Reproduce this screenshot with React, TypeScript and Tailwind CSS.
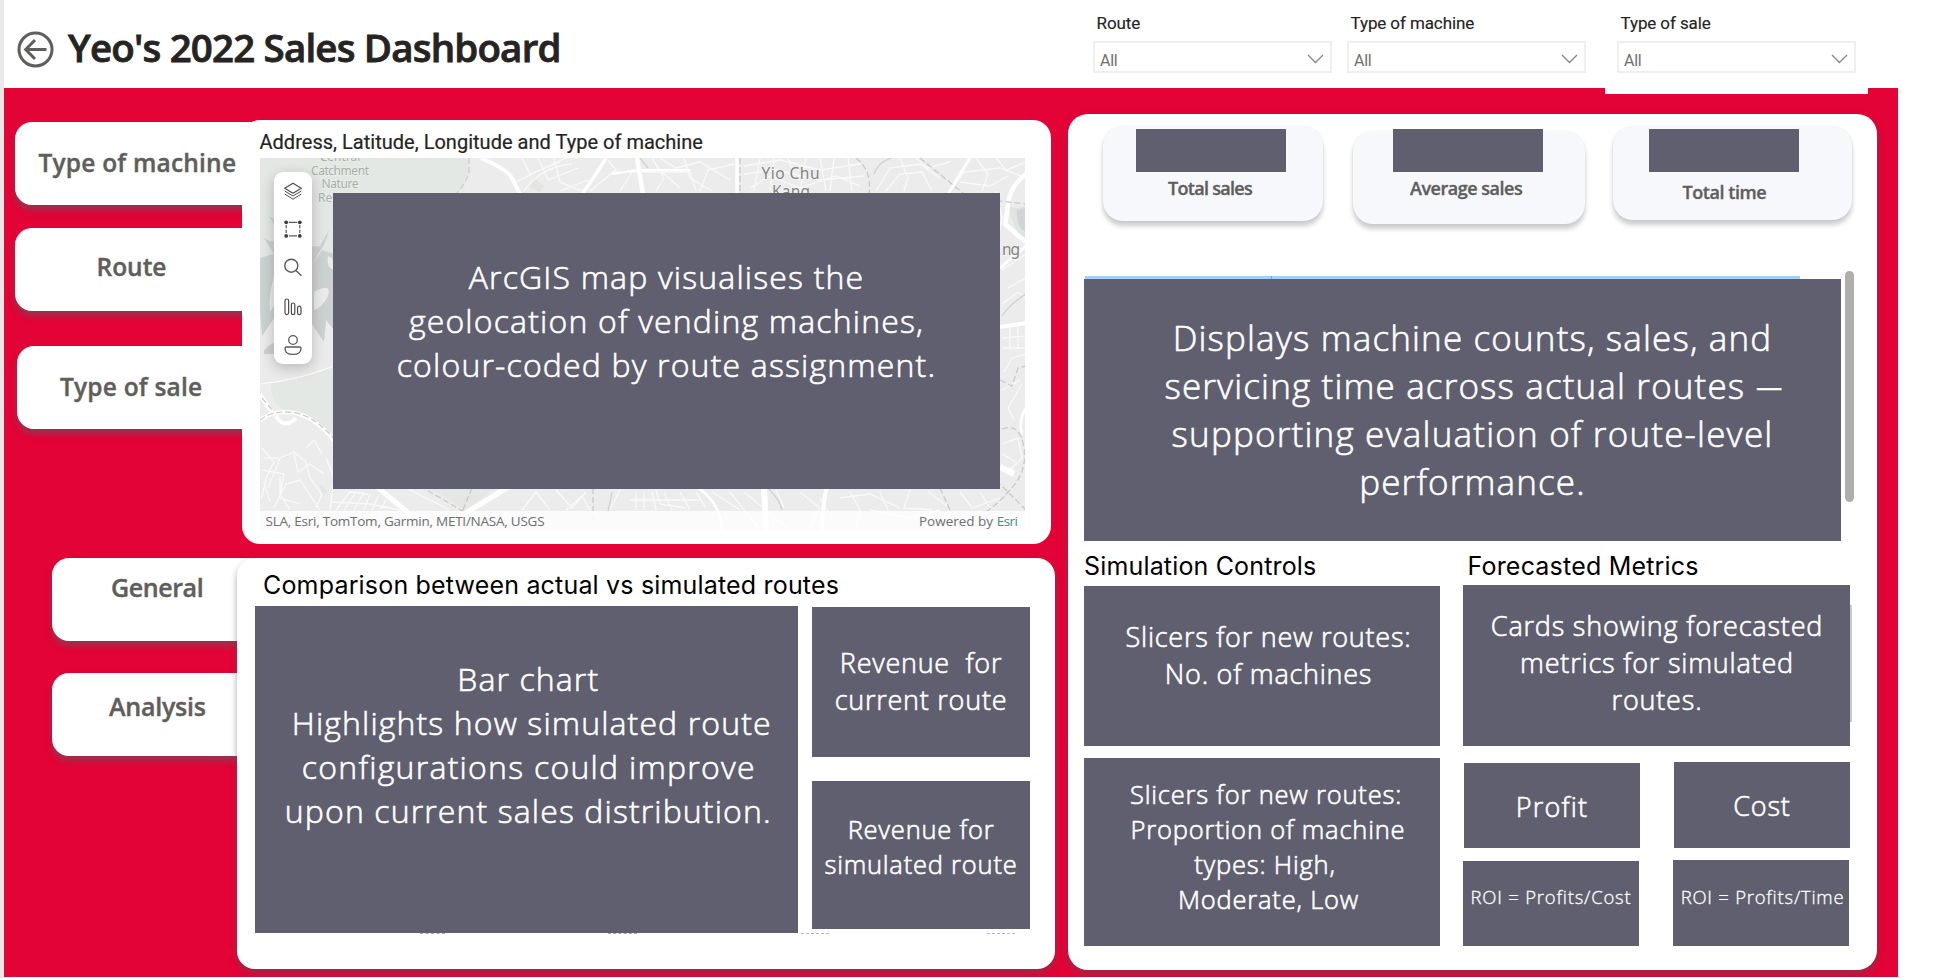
import type { ReactNode } from "react";

const slabText =
  "font-['Open_Sans',sans-serif] font-light text-white text-center whitespace-pre";

const thick = "[-webkit-text-stroke:0.6px_white]";
const thin = "[-webkit-text-stroke:0.3px_white]";

function Slab({ className, fine, children }: { className: string; fine?: boolean; children?: ReactNode }) {
  return (
    <div className={`shrink-0 overflow-hidden bg-[#605f70] ${slabText} ${fine ? thin : thick} ${className}`}>{children}</div>
  );
}

function Filter({ label, className }: { label: string; className: string }) {
  return (
    <div className={`shrink-0 w-[239px] pt-[13px] font-[Roboto,sans-serif] ${className}`}>
      <div className="pl-[3.5px] h-7 text-[17px] leading-5 tracking-[-0.1px] text-[#252423] [-webkit-text-stroke:0.15px_#252423]">{label}</div>
      <div className="h-8 w-full border-2 border-[#efefef] bg-white flex items-start justify-between pl-[5px] pr-[6px]">
        <span className="pt-[7.5px] text-[16px] leading-5 tracking-[-0.3px] text-[#706f6e]">All</span>
        <svg className="mt-[11px]" width="17" height="10" viewBox="0 0 17 10" fill="none" stroke="#868686" strokeWidth="1.3">
          <path d="M1 1l7.5 7.5L16 1" />
        </svg>
      </div>
    </div>
  );
}

function NavTab({ label, className }: { label: string; className: string }) {
  return (
    <div
      className={`shrink-0 h-[83px] rounded-l-[17px] bg-white shadow-[0_5px_6px_rgba(90,90,95,0.55)] font-['Open_Sans',sans-serif] font-semibold leading-[34px] text-[#605e5c] whitespace-nowrap [-webkit-text-stroke:0.4px_#605e5c] ${className}`}
    >
      {label}
    </div>
  );
}

function Kpi({ label, card, slab, text }: { label: string; card: string; slab: string; text: string }) {
  return (
    <div
      className={`shrink-0 rounded-[20px] bg-[#f7f8fc] shadow-[0_5px_5px_rgba(0,0,0,0.2),0_0_2px_rgba(0,0,0,0.08)] ${card}`}
    >
      <div className={`w-[150px] bg-[#605f70] ${slab}`} />
      <div
        className={`font-['Open_Sans',sans-serif] font-semibold text-[18px] leading-6 text-[#605e5c] whitespace-nowrap [-webkit-text-stroke:0.35px_#605e5c] ${text}`}
      >
        {label}
      </div>
    </div>
  );
}

function MapArt() {
  return (
    <svg className="absolute inset-0" width="766" height="372" viewBox="0 0 766 372" fill="none">
      <rect width="766" height="372" fill="#ececec" />
      <path d="M0 0H209V14Q206 26 198 36H74V210L50 218Q20 226 0 226Z" fill="#e3e8e4" />
      <path d="M0 170Q30 150 74 165V208Q40 222 0 226Z" fill="#ebebeb" />
      <path
        d="M4 80Q14 86 18 82L28 90L60 88L69 72Q66 86 58 96L52 108L62 92L74 96V172L66 162L64 184L52 166L44 172L34 196L4 196Q2 190 16 184L26 176L14 160L2 178L0 150V100L14 96Z"
        fill="#ccd1d2"
      />
      <path d="M14 118Q24 124 22 136L10 154Q8 140 14 118ZM54 134Q72 124 68 138Q62 150 54 152ZM68 98Q76 100 74 112Q66 110 68 98ZM30 150Q40 160 34 174L24 166Z" fill="#ebebeb" />
      <path d="M11 224Q45 220 74 208V284Q54 258 24 252Q10 246 11 224Z" fill="#e3e8e4" />
      <path d="M9 58l6 4-1 4z" fill="#ccd1d2" />
      <path d="M170 330L205 352L236 330Z" fill="#e3e8e4" />
      <path d="M748 46Q758 54 766 46V82Q754 76 748 46Z" fill="#dfe4e1" />
      <path d="M757 52L766 50V74Q756 70 757 52Z" fill="#cfd5d6" />
      <path d="M270 30L274 20L284 28L280 34ZM60 326l8 8-6 4z" fill="#e0e6e1" />
      <g stroke="#f9f9f9" strokeWidth="1.3">
        <path d="M262 0L270 16L300 4M278 0L288 22L318 10M294 0L300 24L322 33M256 24L280 12L306 0M264 33Q282 8 312 6M300 33L328 22M330 33L356 12L348 2M360 33L372 14L400 12L420 30M352 14H430L436 33M392 0L404 20L396 33" />
        <path d="M400 0L416 10L440 4L470 22M424 0L430 20L452 33M440 33L448 12L474 6M484 8L520 2L560 12L600 6M484 16L516 12L560 22L604 18M490 30L510 18L540 30L576 18L600 28M500 0L494 33M514 0L510 33M528 0L532 12M546 0L540 33M560 0L566 33M574 0L570 33M588 0L592 33" />
        <path d="M616 33L630 10L660 6L680 20M626 33L640 16L662 14L672 33M640 0L648 20L644 33M656 0L668 10L690 4M690 33L704 14L740 10L766 20M716 0L728 16L722 33M736 0L746 12L766 4M700 24L730 28L748 18" />
        <path d="M736 33L742 60L736 90M742 112L766 96M748 130L766 120M742 146L758 134L766 140M742 180L766 178M742 190H766M750 168V192M758 166V190M744 214L752 200L766 196M742 232L760 222M754 262L748 250L762 226M742 286L758 280L762 300L750 312M742 296L756 304" />
        <path d="M2 290L14 304L6 320L2 340M8 330L20 300L34 294L46 304L50 320L62 336L56 350M2 312L24 316L20 336L30 352M14 350L26 326L40 322L60 352M46 290L54 282L62 296M34 296L38 314L50 306L64 316M20 318V340L40 346M4 300H18M4 324L10 344M66 300L74 320L70 352" />
        <path d="M76 352L90 334L108 336M84 352L96 334M94 352L104 334M104 352L110 336M112 352L118 338M120 352L126 342M70 344L110 346L140 352M150 332L190 352M262 352L276 334L290 352M296 332L312 350L326 334M306 352L322 338L330 352M350 352L360 332M376 334V352M384 334V352M392 334L396 352M370 342H440M404 334L412 352M420 334L430 352M396 332L400 346L426 350" />
        <path d="M436 334L446 350M452 334L480 352M470 334L500 372M484 334L530 372M516 332L524 350M540 334L560 350L548 372M580 340L610 336L640 350M590 334L600 352L596 372M620 334L628 352M650 332L644 350L672 352M668 334L690 350M700 334L712 350L740 340M720 334L730 350M560 340L572 360M610 352L650 360L680 352" />
      </g>
      <g stroke="#ffffff" strokeLinejoin="round">
        <path d="M221 0Q248 12 252 20T260 36" strokeWidth="4" />
        <path d="M346 0Q334 20 322 36" strokeWidth="3.5" />
        <path d="M377 0L383 36" strokeWidth="4.5" />
        <path d="M352 16L377 12L430 12" strokeWidth="1.8" />
        <path d="M477 0V36" strokeWidth="3.5" />
        <path d="M710 0L688 36" strokeWidth="3" />
        <path d="M766 16Q750 28 748 46T745 66Q756 76 766 84" strokeWidth="4.5" />
        <path d="M740 110L766 88" strokeWidth="3" />
        <path d="M740 169L766 165" strokeWidth="4" />
        <path d="M0 262Q10 254 26 254Q52 254 76 285M0 236Q8 250 14 256M16 258Q24 272 36 260" strokeWidth="4" />
        <path d="M0 226Q40 222 74 208" strokeWidth="1" />
        <path d="M116 328L152 358" strokeWidth="5" />
        <path d="M204 356L250 328" strokeWidth="5" />
        <path d="M504 328L506 372" strokeWidth="6" />
        <path d="M567 328Q562 350 562 372" strokeWidth="4" />
        <path d="M438 330Q460 344 462 372" strokeWidth="2.5" />
        <path d="M740 309L754 316" strokeWidth="6" />
        <path d="M766 250Q758 262 762 276" strokeWidth="2.5" />
      </g>
      <g stroke="#c9c9c5" strokeWidth="1.3" strokeDasharray="6 3">
        <path d="M209 0V14Q206 26 196 36" stroke="#d0cfc8" />
        <path d="M0 262Q10 254 26 254Q52 254 74 281M2 240L14 254" />
        <path d="M480 0V36M596 0Q612 12 609 36M660 0L704 36L740 43L766 46" />
        <path d="M160 328L184 342L204 354M212 330L202 354M333 330V362M680 330L690 352M766 352L740 326M742 271Q760 264 764 290T746 336Q740 344 726 354M740 222L752 228L758 210L766 208" />
      </g>
      <g stroke="#cdd3d3" strokeWidth="1.3">
        <path d="M614 16Q618 4 632 0M380 0L388 10M508 330Q520 342 522 352M742 158Q750 146 766 136M348 354L352 334" />
      </g>
      <g
        fontFamily="'Noto Sans', sans-serif"
        textAnchor="middle"
        fill="#a7aea2"
        fontSize="12"
        stroke="#eef1ee"
        strokeWidth="1"
        paintOrder="stroke"
      >
        <text x="80" y="2.500">Central</text>
        <text x="80" y="16.500" textLength="58">Catchment</text>
        <text x="80" y="30" textLength="37">Nature</text>
        <text x="58" y="44" textAnchor="start">Reserve</text>
      </g>
      <g
        fontFamily="'Noto Sans', sans-serif"
        fill="#828282"
        fontSize="15.500"
        stroke="#f6f6f6"
        strokeWidth="1.500"
        paintOrder="stroke"
      >
        <text x="501.500" y="21" textLength="58">Yio Chu</text>
        <text x="512" y="39" textLength="38">Kang</text>
        <text x="742" y="97" textLength="18">ng</text>
      </g>
    </svg>
  );
}

function MapToolbar() {
  return (
    <div className="absolute left-[14.5px] top-[14px] w-[38px] h-[192px] rounded-[9px] bg-white shadow-[0_4px_14px_rgba(0,0,0,0.22)] flex flex-col items-center pt-[10px] gap-[18.200px]">
      <svg width="20" height="20" viewBox="0 0 20 20" fill="none" stroke="#4d4d4d" strokeWidth="1.2" strokeLinejoin="round">
        <path d="M10 1.200L18.300 6.200L10 11.200L1.700 6.200Z" />
        <path d="M1.700 9L10 14L18.300 9M1.700 12L10 17.200L18.300 12" strokeWidth="1" />
      </svg>
      <svg width="20" height="20" viewBox="0 0 20 20" fill="#3d3d3d" stroke="#5c5c5c" strokeWidth="1.2">
        <path d="M6 2.300H14M6 15.900H14M3.200 5V8.300M3.200 9.700V13M16.800 5V8.300M16.800 9.700V13" />
        <g stroke="none">
          <circle cx="3.200" cy="2.300" r="1.900" />
          <circle cx="16.800" cy="2.300" r="1.900" />
          <circle cx="3.200" cy="15.900" r="1.900" />
          <circle cx="16.800" cy="15.900" r="1.900" />
        </g>
      </svg>
      <svg width="20" height="20" viewBox="0 0 20 20" fill="none" stroke="#5a5a5a" strokeWidth="1.400">
        <circle cx="8.300" cy="7.700" r="6.500" />
        <path d="M12.900 12.400L18.400 17.800" />
      </svg>
      <svg width="20" height="20" viewBox="0 0 20 20" fill="none" stroke="#4d4d4d" strokeWidth="1.200">
        <rect x="2" y="2" width="3.600" height="15.600" rx="1.800" />
        <rect x="8.400" y="6" width="3.400" height="11.600" rx="1.700" />
        <rect x="14.600" y="9.200" width="3.400" height="8.400" rx="1.700" />
      </svg>
      <svg width="20" height="20" viewBox="0 0 20 20" fill="none" stroke="#5a5a5a" strokeWidth="1.300">
        <circle cx="10" cy="5" r="4.300" />
        <path d="M3.300 12H16.700Q18 12 18 13.400C18 17 15 19.300 10 19.300S2 17 2 13.400Q2 12 3.300 12Z" />
      </svg>
    </div>
  );
}

function MapPanel() {
  return (
    <section className="relative z-10 shrink-0 w-[809px] h-[423.5px] rounded-[18px] bg-white pt-[9.5px] pl-[17.5px]">
      <h2 className="h-[28.500px] font-[Roboto,sans-serif] text-[20px] leading-6 tracking-[0.02px] text-[#252423] whitespace-nowrap [-webkit-text-stroke:0.2px_#252423]">
        Address, Latitude, Longitude and Type of machine
      </h2>
      <div className="relative w-[765px] h-[372px] overflow-hidden">
        <MapArt />
        <MapToolbar />
        <div className="relative flex flex-col h-full">
          <Slab className="mt-[35px] ml-[73.5px] w-[667px] h-[295.5px] pt-[61.5px] text-[32px] leading-[44px] tracking-[1.17px]">
            <p>ArcGIS map visualises the</p>
            <p>geolocation of vending machines,</p>
            <p>colour-coded by route assignment.</p>
          </Slab>
          <div className="mt-auto h-[19px] bg-white/80 flex justify-between pl-[6px] pr-[7px] pt-px font-['Open_Sans',sans-serif] text-[13.500px] leading-[19px] text-[#6e6e6e] whitespace-nowrap">
            <span className="tracking-[-0.24px]">SLA, Esri, TomTom, Garmin, METI/NASA, USGS</span>
            <span>
              Powered by <span className="text-[#3f9482] tracking-[-0.5px]">Esri</span>
            </span>
          </div>
        </div>
      </div>
    </section>
  );
}

function ComparisonPanel() {
  return (
    <section className="relative z-10 shrink-0 w-[818px] h-[411px] rounded-[18px] bg-white shadow-[0_4px_6px_rgba(80,80,85,0.5)] pt-[11px] pl-[17.5px]">
      <h2 className="h-[37px] pl-[8.5px] font-[Inter,sans-serif] text-[25px] leading-8 tracking-[0.18px] text-black whitespace-nowrap">
        Comparison between actual vs simulated routes
      </h2>
      <div className="flex gap-[14px]">
        <Slab className="w-[543.5px] h-[326.5px] pt-[50.5px] pl-[4px] text-[32px] leading-[44px] tracking-[1.12px]">
          <p>Bar chart</p>
          <p className="pl-[7px]">Highlights how simulated route</p>
          <p className="pl-px tracking-[1.250px]">configurations could improve</p>
          <p>upon current sales distribution.</p>
        </Slab>
        <div className="flex flex-col gap-[23.5px] pt-px">
          <Slab className="w-[218px] h-[150px] pt-[36.5px] text-[27px] leading-[37.5px] tracking-[0.75px]">
            <p>Revenue&nbsp; for</p>
            <p>current route</p>
          </Slab>
          <Slab className="w-[218px] h-[148.500px] pt-[31px] text-[25.5px] leading-[35px] tracking-[0.78px]">
            <p>Revenue for</p>
            <p>simulated route</p>
          </Slab>
        </div>
      </div>
      <div className="flex h-px pl-[165px]">
        <div className="w-[25px] border-t border-dashed border-[#a8a8a8]" />
        <div className="ml-[163px] w-[29px] border-t border-dashed border-[#a8a8a8]" />
        <div className="ml-[164px] w-[28px] border-t border-dashed border-[#b8b8b8]" />
        <div className="ml-[158px] w-[28px] border-t border-dashed border-[#b8b8b8]" />
      </div>
    </section>
  );
}

function MetricsPanel() {
  return (
    <section className="shrink-0 w-[808.5px] h-[856px] rounded-[20px] bg-white shadow-[0_4px_6px_rgba(80,80,85,0.5)]">
      <div className="flex items-start h-[162px] pl-[35px] pt-[12px]">
        <Kpi label="Total sales" card="w-[220px] h-[95px]" slab="h-[43.500px] mt-[2.500px] ml-[33px]" text="pt-[4px] pl-[65px] tracking-[-0.7px]" />
        <Kpi label="Average sales" card="ml-[30px] mt-[4.5px] w-[232px] h-[93.500px]" slab="h-[43.500px] -mt-[2px] ml-[40px]" text="pt-[4px] pl-[57px] tracking-[-0.48px]" />
        <Kpi label="Total time" card="ml-[28px] w-[239px] h-[94px]" slab="h-[43.500px] mt-[2.500px] ml-[36px]" text="pt-[8px] pl-[69.500px] tracking-[-0.45px]" />
      </div>
      <div className="flex gap-[4px] pl-[16px] -mt-[5px]">
        <div className="pt-[5px]">
          <div className="flex h-[2.500px] w-[715px] ml-px bg-[#a3cff9]">
            <div className="ml-[186px] w-px bg-[#6ea6dd]" />
          </div>
          <Slab className="w-[757px] h-[262.5px] pt-[35px] pl-[20px] text-[35px] leading-[48px] tracking-[1.15px]">
            <p>Displays machine counts, sales, and</p>
            <p>
              servicing time across actual routes <span className="inline-block w-[25px] origin-left scale-x-[0.75]">—</span>
            </p>
            <p className="tracking-[1.200px]">supporting evaluation of route-level</p>
            <p>performance.</p>
          </Slab>
        </div>
        <div className="w-[8.5px] h-[231px] rounded-full bg-[#b0aead]" />
      </div>
      <div className="flex pl-[16px]">
        <div className="w-[356px] pt-[9px]">
          <h2 className="h-[36px] font-[Inter,sans-serif] text-[25px] leading-8 tracking-[0.16px] text-black">Simulation Controls</h2>
          <Slab className="w-[356px] h-[160px] pt-[31.500px] pl-[13px] text-[27px] leading-[37px] tracking-[0.75px]">
            <p>Slicers for new routes:</p>
            <p>No. of machines</p>
          </Slab>
          <Slab className="mt-[12px] w-[356px] h-[188px] pt-[19px] pl-[10px] text-[25.5px] leading-[35px] tracking-[0.8px]">
            <p className="pr-[2px]">Slicers for new routes:</p>
            <p className="pl-[2px]">Proportion of machine</p>
            <p className="pr-[4px]">types: High,</p>
            <p className="pl-[3px]">Moderate, Low</p>
          </Slab>
        </div>
        <div className="ml-[23px] w-[390px] pt-[9px]">
          <h2 className="h-[35px] pl-[4.5px] font-[Inter,sans-serif] text-[25px] leading-8 tracking-[0.2px] text-black">Forecasted Metrics</h2>
          <div className="flex items-start">
            <Slab className="w-[387px] h-[161px] pt-[22px] pl-px text-[27px] leading-[37px] tracking-[0.8px]">
              <p>Cards showing forecasted</p>
              <p>metrics for simulated</p>
              <p>routes.</p>
            </Slab>
            <div className="mt-[20px] w-[2px] h-[117px] bg-[#c9c9c9]" />
          </div>
          <div className="flex items-end gap-[34px] pl-px mt-[15.500px] h-[86.5px]">
            <Slab className="w-[176px] h-[85.500px] pt-[25px] text-[27px] leading-[37px] tracking-[1.200px]">Profit</Slab>
            <Slab className="w-[176px] h-[86.5px] pt-[25px] text-[27px] leading-[37px] tracking-[0.8px]">Cost</Slab>
          </div>
          <div className="flex items-end gap-[34px] mt-[11.500px] h-[86.5px]">
            <Slab fine className="w-[176px] h-[85.500px] pt-[23px] text-[18.5px] leading-[26px] tracking-[0.78px]">ROI = Profits/Cost</Slab>
            <Slab fine className="w-[176px] h-[86.5px] pt-[24px] pl-[3px] text-[18.5px] leading-[26px] tracking-[0.76px]">ROI = Profits/Time</Slab>
          </div>
        </div>
      </div>
    </section>
  );
}

export default function App() {
  return (
    <div className="w-[1953px] h-[978px] overflow-hidden bg-white flex">
      <div className="shrink-0 w-[4px] h-full bg-[#e9e7e8]" />
      <div className="shrink-0 w-[1894px] h-[977px] flex flex-col">
        <header className="relative shrink-0 h-[88px] bg-white flex items-start pl-[13px]">
          <svg className="mt-[31px] shrink-0" width="37" height="37" viewBox="0 0 37 37" fill="none" stroke="#605e5c" strokeWidth="3">
            <circle cx="18.500" cy="18.500" r="16.500" />
            <path d="M29.500 18.500H9M18 9L8.700 18.500L18 28" />
          </svg>
          <h1 className="w-[1019px] pl-[14px] pt-[23px] font-['Open_Sans',sans-serif] font-semibold text-[38.5px] leading-[48px] tracking-[-0.82px] text-[#252423] whitespace-nowrap [-webkit-text-stroke:0.8px_#252423]">
            Yeo&#39;s 2022 Sales Dashboard
          </h1>
          <Filter label="Route" className="ml-[20px]" />
          <Filter label="Type of machine" className="ml-[15px]" />
          <Filter label="Type of sale" className="ml-[31px]" />
          <div className="absolute left-[1601px] top-[88px] w-[263px] h-[5.5px] bg-white" />
        </header>
        <main className="grow overflow-hidden bg-[#e30336] flex">
          <div className="shrink-0 w-[1064px] flex flex-col pt-[32px] gap-[14.5px]">
            <div className="flex h-[423.5px]">
              <nav className="shrink-0 w-[238px] flex flex-col pt-[2px] pl-[10.5px]">
                <NavTab label="Type of machine" className="w-[250px] pl-[24px] pt-[24px] text-[24.5px] tracking-[0.2px]" />
                <NavTab label="Route" className="mt-[23px] w-[250px] pl-[82px] pt-[21.5px] text-[24.5px]" />
                <NavTab label="Type of sale" className="mt-[35px] ml-[2px] w-[248px] pl-[43.5px] pt-[23.500px] text-[24.5px] tracking-[0.2px]" />
              </nav>
              <MapPanel />
            </div>
            <div className="flex h-[411px]">
              <nav className="shrink-0 w-[233px] flex flex-col pl-[48px]">
                <NavTab label="General" className="w-[200px] pl-[59px] pt-[11.500px] text-[25px] tracking-[-0.4px]" />
                <NavTab label="Analysis" className="mt-[32px] w-[200px] pl-[57px] pt-[16px] text-[25px] tracking-[-0.25px]" />
              </nav>
              <ComparisonPanel />
            </div>
          </div>
          <div className="pt-[26px]">
            <MetricsPanel />
          </div>
        </main>
      </div>
    </div>
  );
}
